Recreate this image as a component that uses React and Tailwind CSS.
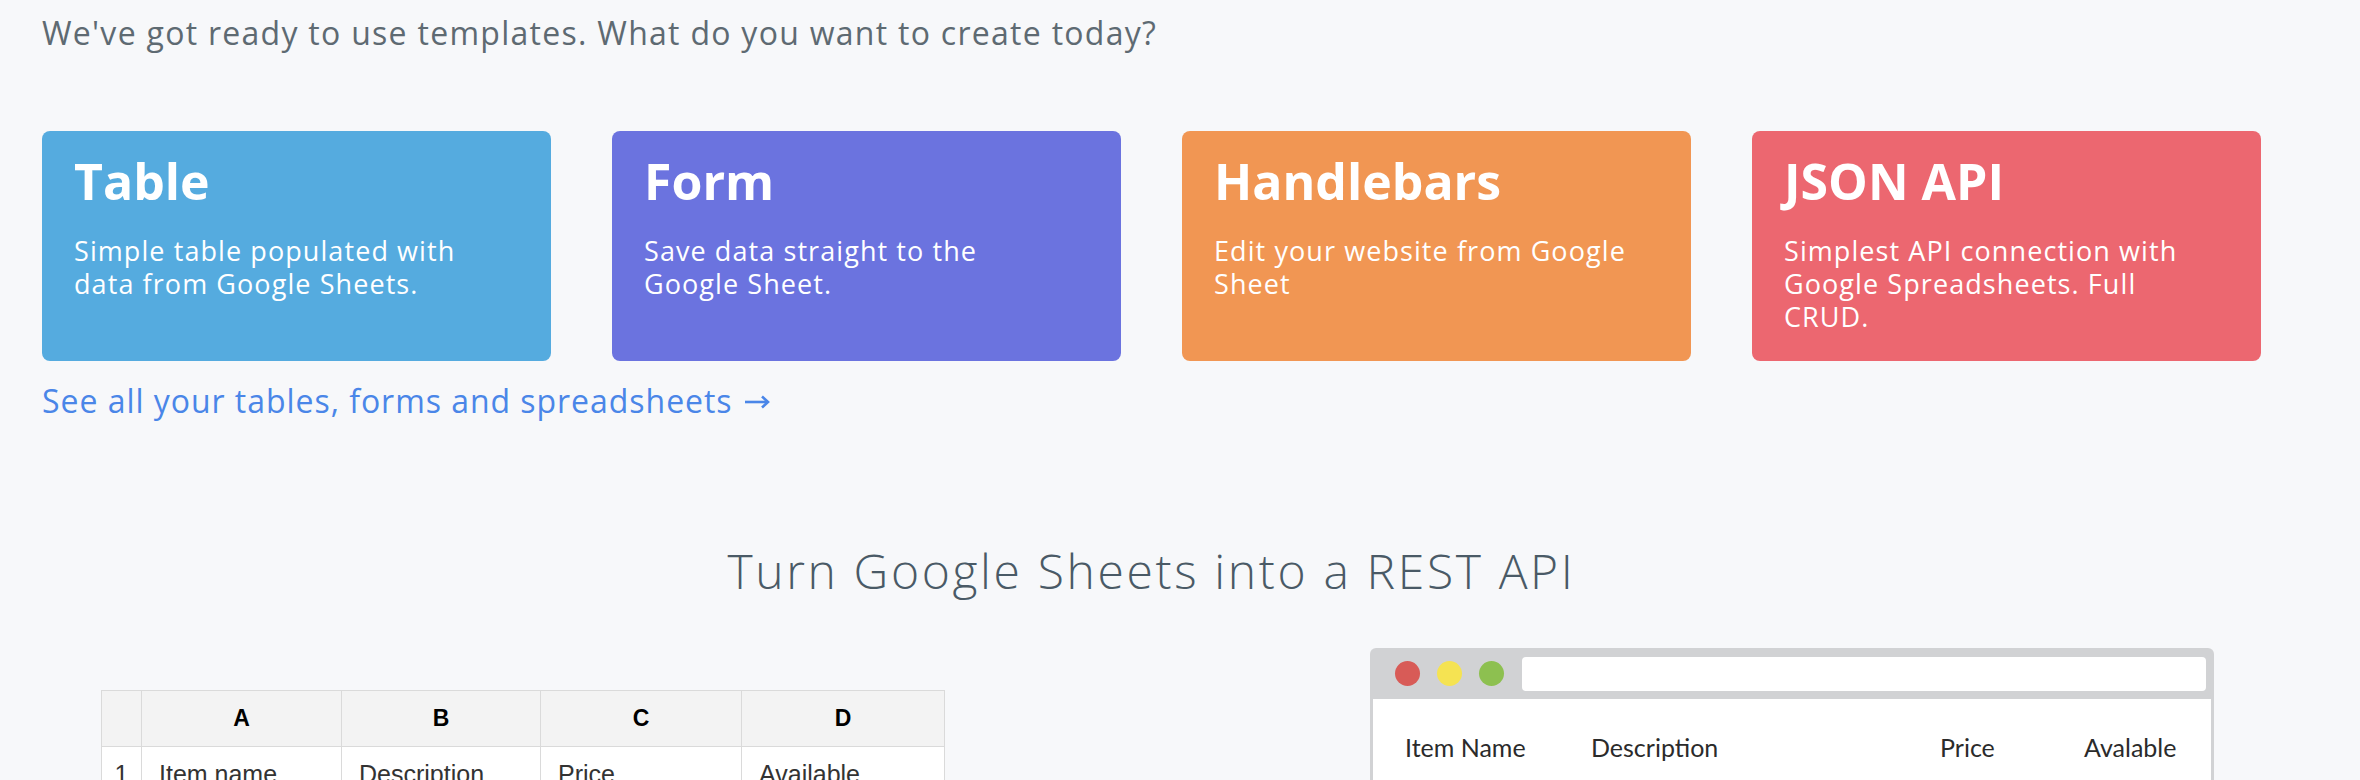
import React from "react";

const cards = [
  { title: "Table", desc: "Simple table populated with data from Google Sheets.", bg: "bg-[#55abdf]" },
  { title: "Form", desc: "Save data straight to the Google Sheet.", bg: "bg-[#6b73df]" },
  { title: "Handlebars", desc: "Edit your website from Google Sheet", bg: "bg-[#f19653]" },
  { title: "JSON API", desc: "Simplest API connection with Google Spreadsheets. Full CRUD.", bg: "bg-[#ec6770]" },
];

function Card({ title, desc, bg }) {
  return (
    <div className={`${bg} h-[230px] rounded-[8px] px-[32px] pt-[20px] text-white`}>
      <div className="text-[50px] leading-[60px] font-bold">{title}</div>
      <p className="mt-[23px] text-[27px] leading-[33px] tracking-[0.04em] pr-[12px]">{desc}</p>
    </div>
  );
}

function Spreadsheet() {
  const cols = ["A", "B", "C", "D"];
  const row = ["Item name", "Description", "Price", "Available"];
  return (
    <div className="w-[844px] ml-[59px] mt-[90px] border border-[#dadada] bg-white font-['Liberation_Sans',Arial,sans-serif]">
      <div className="grid grid-cols-[40px_200px_199px_201px_1fr] h-[55px] bg-[#f3f3f3]">
        <div className="border-r border-[#dadada]" />
        {cols.map((c, i) => (
          <div
            key={c}
            className={`flex items-center justify-center text-[23px] font-bold text-black ${i < 3 ? "border-r border-[#dadada]" : ""}`}
          >
            {c}
          </div>
        ))}
      </div>
      <div className="grid grid-cols-[40px_200px_199px_201px_1fr] h-[60px] border-t border-[#dadada]">
        <div className="border-r border-[#dadada] text-center text-[25px] text-[#333] pt-[13px] leading-[28px]">1</div>
        {row.map((c, i) => (
          <div
            key={c}
            className={`pl-[17px] pt-[13px] text-[25px] leading-[28px] text-[#333] ${i < 3 ? "border-r border-[#dadada]" : ""}`}
          >
            {c}
          </div>
        ))}
      </div>
    </div>
  );
}

function Browser() {
  return (
    <div className="w-[844px] ml-[425px] mt-[48px] rounded-t-[6px] overflow-hidden">
      <div className="h-[51px] bg-[#d1d2d4] flex items-center pl-[25px] pr-[8px]">
        <span className="w-[25px] h-[25px] rounded-full bg-[#d85b57]" />
        <span className="w-[25px] h-[25px] rounded-full bg-[#f5e352] ml-[17px]" />
        <span className="w-[25px] h-[25px] rounded-full bg-[#8dc050] ml-[17px]" />
        <div className="flex-1 h-[34px] bg-white rounded-[4px] ml-[18px]" />
      </div>
      <div className="bg-white border-x-[3px] border-[#d1d2d4] h-[100px] font-['Lato',sans-serif] text-[25px] text-[#2b2b2b]">
        <div className="flex pt-[33px] leading-[30px]">
          <span className="ml-[32px] w-[186px]">Item Name</span>
          <span className="w-[349px]">Description</span>
          <span className="w-[144px]">Price</span>
          <span>Avalable</span>
        </div>
      </div>
    </div>
  );
}

export default function App() {
  return (
    <div className="min-h-screen w-[2360px] bg-[#f7f8fa] font-['Open_Sans',sans-serif] overflow-hidden">
      <div className="ml-[42px] w-[2219px]">
        <p className="pt-[14px] text-[32px] leading-[37px] tracking-[0.04em] text-[#5e6a72]">
          We've got ready to use templates. What do you want to create today?
        </p>
        <div className="mt-[80px] grid grid-cols-4 gap-[61px]">
          {cards.map((c) => (
            <Card key={c.title} {...c} />
          ))}
        </div>
        <a className="flex items-center mt-[21px] text-[32px] leading-[37px] tracking-[0.03em] text-[#4a86e8] w-fit">
          <span>See all your tables, forms and spreadsheets</span>
          <svg className="ml-[12px] mt-[3px]" width="25" height="14" viewBox="0 0 25 14" fill="none" stroke="#4a86e8" strokeWidth="2.6" strokeLinecap="butt">
            <path d="M0 7H23" />
            <path d="M17 1.5L23 7L17 12.5" strokeLinejoin="miter" />
          </svg>
        </a>
        <h2 className="mt-[123px] text-center text-[48px] leading-[58px] tracking-[0.055em] font-light text-[#4a5a66]">
          Turn Google Sheets into a REST API
        </h2>
        <div className="flex items-start">
          <Spreadsheet />
          <Browser />
        </div>
      </div>
    </div>
  );
}
